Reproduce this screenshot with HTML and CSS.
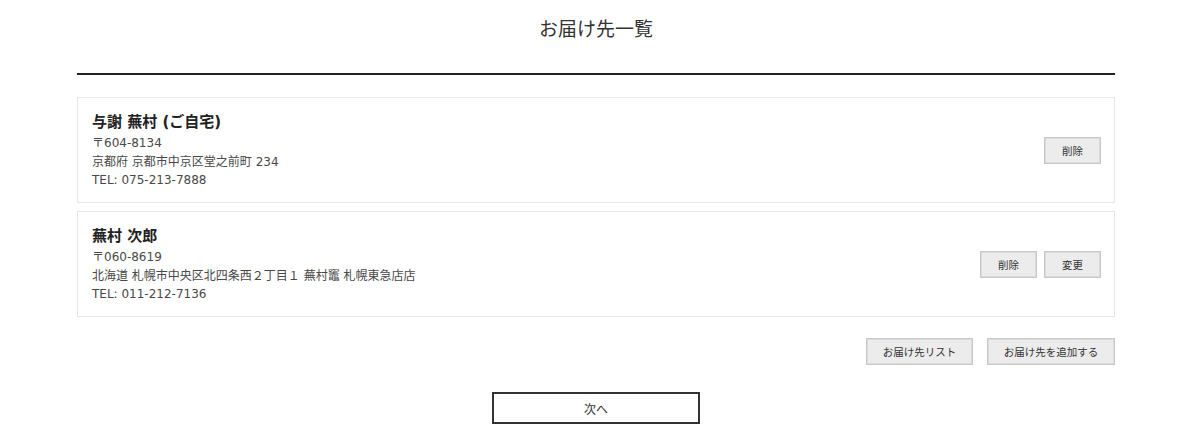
FILE: index.html
```html
<!DOCTYPE html>
<html lang="ja">
<head>
<meta charset="utf-8">
<title>お届け先一覧</title>
<link rel="stylesheet" href="styles.css">
</head>
<body>
<div class="page">
  <header class="page-header">
    <h1 class="page-title">お届け先一覧</h1>
  </header>
  <div class="address-list">
    <div class="address-card">
      <div class="address-info">
        <div class="address-name">与謝 蕪村 (ご自宅)</div>
        <div class="address-line">〒604-8134</div>
        <div class="address-line">京都府 京都市中京区堂之前町 234</div>
        <div class="address-line">TEL: 075-213-7888</div>
      </div>
      <div class="card-actions">
        <button class="btn btn-small">削除</button>
      </div>
    </div>
    <div class="address-card">
      <div class="address-info">
        <div class="address-name">蕪村 次郎</div>
        <div class="address-line">〒060-8619</div>
        <div class="address-line">北海道 札幌市中央区北四条西２丁目１ 蕪村竈 札幌東急店店</div>
        <div class="address-line">TEL: 011-212-7136</div>
      </div>
      <div class="card-actions">
        <button class="btn btn-small">削除</button>
        <button class="btn btn-small">変更</button>
      </div>
    </div>
  </div>
  <div class="list-actions">
    <button class="btn btn-list">お届け先リスト</button>
    <button class="btn btn-add">お届け先を追加する</button>
  </div>
  <div class="next-row">
    <button class="btn-next">次へ</button>
  </div>
</div>
</body>
</html>
```
FILE: styles.css
```css
html, body {
  margin: 0;
  padding: 0;
  background: #fff;
}
body {
  font-family: "DejaVu Sans", "Noto Sans CJK JP", sans-serif;
  color: #333;
}
.page {
  width: 1038px;
  margin-left: 77px;
}
.page-header {
  height: 73px;
  border-bottom: 2px solid #222;
  box-sizing: content-box;
}
.page-title {
  margin: 0;
  padding-top: 16px;
  font-size: 19px;
  line-height: 24px;
  font-weight: normal;
  text-align: center;
  color: #333;
  font-family: "Noto Sans CJK JP", sans-serif;
}
.address-list {
  margin-top: 22px;
  display: flex;
  flex-direction: column;
  gap: 8px;
}
.address-card {
  border: 1px solid #e6e6e6;
  height: 104px;
  padding: 0 13px 0 14px;
  display: flex;
  align-items: center;
  justify-content: space-between;
}
.address-info {
  padding-top: 2px;
}
.address-name {
  font-size: 15px;
  font-weight: bold;
  line-height: 20px;
  color: #222;
  margin-bottom: 2px;
}
.address-line {
  font-size: 12px;
  line-height: 18.5px;
  color: #484848;
}
.card-actions {
  display: flex;
  gap: 7px;
}
.btn {
  font-family: "Noto Sans CJK JP", sans-serif;
  font-size: 10.5px;
  color: #333;
  background: #ececec;
  border: 1px solid #c8c8c8;
  box-shadow: inset 0 0 0 1px #dcdcdc;
  height: 27px;
  padding: 0;
  cursor: pointer;
}
.btn-small {
  width: 57px;
}
.list-actions {
  margin-top: 21px;
  display: flex;
  justify-content: flex-end;
  gap: 14px;
}
.btn-list {
  width: 107px;
}
.btn-add {
  width: 128px;
}
.next-row {
  margin-top: 27px;
  display: flex;
  justify-content: center;
}
.btn-next {
  width: 208px;
  height: 32px;
  background: #fff;
  border: 2px solid #333;
  font-family: "Noto Sans CJK JP", sans-serif;
  font-size: 12px;
  color: #333;
  padding: 0;
}
```
